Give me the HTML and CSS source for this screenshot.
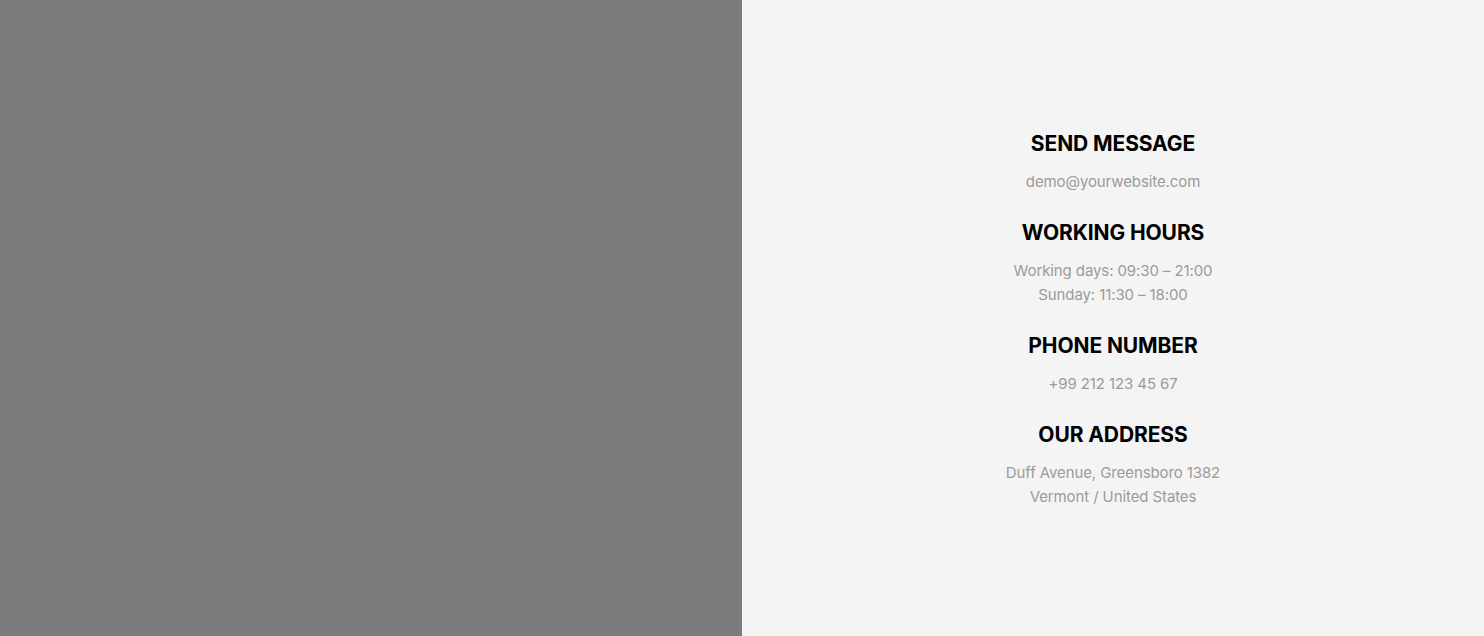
FILE: index.html
```html
<!DOCTYPE html>
<html lang="en">
<head>
<meta charset="utf-8">
<title>Contact</title>
<link rel="stylesheet" href="styles.css">
</head>
<body>
<div class="page">
  <div class="media"></div>
  <div class="info">
    <div class="info-inner">
      <section class="item">
        <h3 class="item-title">SEND MESSAGE</h3>
        <p class="item-text">demo@yourwebsite.com</p>
      </section>
      <section class="item">
        <h3 class="item-title">WORKING HOURS</h3>
        <p class="item-text">Working days: 09:30 – 21:00<br>Sunday: 11:30 – 18:00</p>
      </section>
      <section class="item">
        <h3 class="item-title">PHONE NUMBER</h3>
        <p class="item-text">+99 212 123 45 67</p>
      </section>
      <section class="item">
        <h3 class="item-title">OUR ADDRESS</h3>
        <p class="item-text">Duff Avenue, Greensboro 1382<br>Vermont / United States</p>
      </section>
    </div>
  </div>
</div>
</body>
</html>
```

FILE: styles.css
```css
* { box-sizing: border-box; }
html, body { margin: 0; padding: 0; }
body {
  font-family: Inter, "Noto Sans", "Liberation Sans", sans-serif;
  background: #f4f4f4;
}
.page {
  display: flex;
  height: 636px;
}
.media {
  width: 742px;
  flex: 0 0 742px;
  background: #7b7c7e;
}
.info {
  flex: 1;
  display: flex;
  align-items: center;
  justify-content: center;
  background: #f4f4f4;
  padding-top: 3px;
}
.info-inner {
  display: flex;
  flex-direction: column;
  gap: 26px;
  text-align: center;
}
.item-title {
  margin: 0 0 13px;
  font-size: 21px;
  line-height: 26px;
  font-weight: 700;
  color: #000;
  letter-spacing: -0.1px;
}
.item-text {
  margin: 0;
  font-size: 15px;
  line-height: 24px;
  color: #9b9b9b;
  letter-spacing: -0.1px;
}
```
